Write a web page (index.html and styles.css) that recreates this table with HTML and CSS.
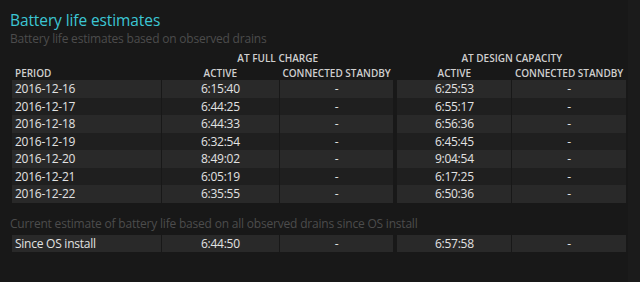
FILE: index.html
```html
<!DOCTYPE html>
<html>
<head>
<meta charset="utf-8">
<link rel="stylesheet" href="styles.css">
</head>
<body>
<div class="page">
  <div class="main">
    <h1 class="title">Battery life estimates</h1>
    <p class="sub">Battery life estimates based on observed drains</p>
    <table class="grid first">
      <colgroup>
        <col class="c-period"><col class="c-act1"><col class="c-cs"><col class="c-gap"><col class="c-act2"><col class="c-cs">
      </colgroup>
      <thead>
        <tr class="group">
          <th></th>
          <th colspan="2">AT FULL CHARGE</th>
          <th></th>
          <th colspan="2">AT DESIGN CAPACITY</th>
        </tr>
        <tr class="labels">
          <th class="left">PERIOD</th>
          <th>ACTIVE</th>
          <th>CONNECTED STANDBY</th>
          <th></th>
          <th>ACTIVE</th>
          <th>CONNECTED STANDBY</th>
        </tr>
      </thead>
      <tbody>
        <tr class="odd"><td class="left">2016-12-16</td><td>6:15:40</td><td>-</td><td class="gap"></td><td>6:25:53</td><td>-</td></tr>
        <tr class="even"><td class="left">2016-12-17</td><td>6:44:25</td><td>-</td><td class="gap"></td><td>6:55:17</td><td>-</td></tr>
        <tr class="odd"><td class="left">2016-12-18</td><td>6:44:33</td><td>-</td><td class="gap"></td><td>6:56:36</td><td>-</td></tr>
        <tr class="even"><td class="left">2016-12-19</td><td>6:32:54</td><td>-</td><td class="gap"></td><td>6:45:45</td><td>-</td></tr>
        <tr class="odd"><td class="left">2016-12-20</td><td>8:49:02</td><td>-</td><td class="gap"></td><td>9:04:54</td><td>-</td></tr>
        <tr class="even"><td class="left">2016-12-21</td><td>6:05:19</td><td>-</td><td class="gap"></td><td>6:17:25</td><td>-</td></tr>
        <tr class="odd"><td class="left">2016-12-22</td><td>6:35:55</td><td>-</td><td class="gap"></td><td>6:50:36</td><td>-</td></tr>
      </tbody>
    </table>
    <p class="sub sub2">Current estimate of battery life based on all observed drains since OS install</p>
    <table class="grid">
      <colgroup>
        <col class="c-period"><col class="c-act1"><col class="c-cs"><col class="c-gap"><col class="c-act2"><col class="c-cs">
      </colgroup>
      <tbody>
        <tr class="odd"><td class="left">Since OS install</td><td>6:44:50</td><td>-</td><td class="gap"></td><td>6:57:58</td><td>-</td></tr>
      </tbody>
    </table>
  </div>
  <div class="strip"></div>
</div>
</body>
</html>
```

FILE: styles.css
```css
html, body {
  margin: 0;
  padding: 0;
  background: #181818;
  height: 100%;
}
.page {
  display: flex;
  width: 640px;
  height: 282px;
  overflow: hidden;
  font-family: "Open Sans", "Noto Sans", sans-serif;
}
.main {
  flex: 1;
  padding: 10px 0 0 10px;
}
.strip {
  width: 12px;
  background: #1b1b1b;
}
.title {
  margin: 0;
  font-size: 15.5px;
  font-weight: 400;
  letter-spacing: -0.1px;
  line-height: 21px;
  color: #3cc6d4;
}
.sub {
  margin: 0;
  font-size: 12px;
  letter-spacing: -0.2px;
  line-height: 15px;
  color: #4c4c4c;
}
.sub2 {
  margin-top: 13px;
  margin-bottom: 4px;
}
.grid {
  border-collapse: separate;
  border-spacing: 1px 0;
  table-layout: fixed;
  width: 616px;
  margin-left: 1px;
  color: #e2e2e2;
  font-size: 12px;
  letter-spacing: -0.25px;
}
.grid.first {
  margin-top: 4px;
}
.c-period { width: 148px; }
.c-act1 { width: 116px; }
.c-cs { width: 113px; }
.c-gap { width: 2px; }
.c-act2 { width: 113px; }
.grid th {
  padding: 0;
  font-size: 10px;
  font-weight: 600;
  letter-spacing: 0;
  color: #cfcfcf;
  text-align: center;
  line-height: 14px;
  white-space: nowrap;
}
.grid .group th {
  height: 16px;
}
.grid .labels th {
  height: 14px;
}
.grid td {
  padding: 0;
  height: 17.5px;
  line-height: 17px;
  text-align: center;
  white-space: nowrap;
}
.grid .left {
  text-align: left;
  padding-left: 3px;
}
.odd td { background: #292929; }
.even td { background: #1f1f1f; }
.grid td.gap { background: transparent; }
```
